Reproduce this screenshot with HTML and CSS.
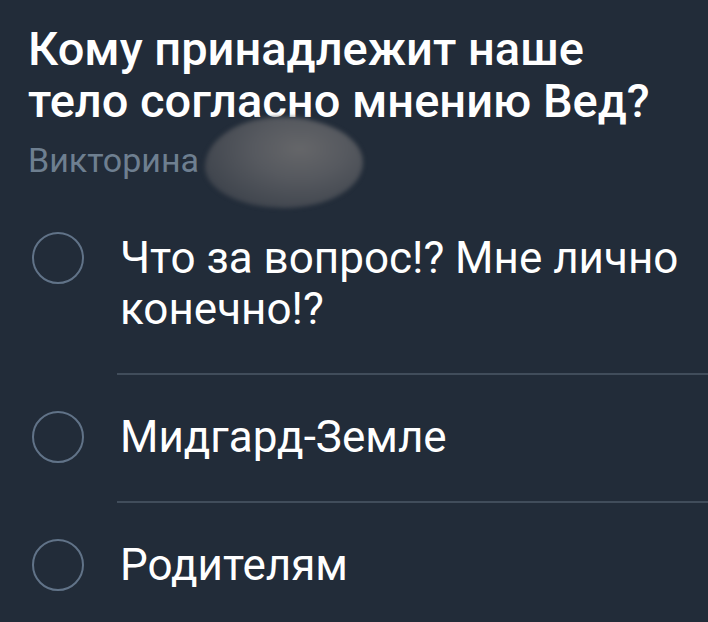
FILE: index.html
```html
<!DOCTYPE html>
<html lang="ru">
<head>
<meta charset="utf-8">
<link rel="stylesheet" href="styles.css">
</head>
<body>
<main class="poll">
  <header class="head">
    <h1 class="question">Кому принадлежит наше тело согласно мнению Вед?</h1>
    <div class="meta"><span class="kind">Викторина</span><span class="blur"></span></div>
  </header>
  <ul class="options">
    <li class="option">
      <span class="radio"></span>
      <span class="label">Что за вопрос!? Мне лично конечно!?</span>
    </li>
    <li class="option">
      <span class="radio"></span>
      <span class="label">Мидгард-Земле</span>
    </li>
    <li class="option">
      <span class="radio"></span>
      <span class="label">Родителям</span>
    </li>
  </ul>
</main>
</body>
</html>
```
FILE: styles.css
```css
html, body {
  margin: 0;
  padding: 0;
  background: #222c39;
  height: 100%;
  overflow: hidden;
}
body {
  font-family: Roboto, "Noto Sans", sans-serif;
  color: #ffffff;
}
.poll {
  padding: 23px 0 0 28px;
}
.question {
  margin: 0;
  font-size: 47px;
  font-weight: 500;
  line-height: 52px;
  width: 645px;
}
.meta {
  position: relative;
  margin-top: 13px;
  height: 40px;
  display: flex;
  align-items: center;
}
.kind {
  font-size: 34px;
  line-height: 40px;
  color: #6e7f90;
}
.blur {
  position: absolute;
  left: 177px;
  top: -23px;
  width: 158px;
  height: 91px;
  border-radius: 48% 52% 50% 50% / 55% 50% 50% 45%;
  background: radial-gradient(ellipse at 60% 35%, #656669 0%, #56595f 35%, #434850 70%, #323944 100%);
  filter: blur(2px);
}
.options {
  list-style: none;
  margin: 53px 0 0 0;
  padding: 0;
}
.option {
  display: flex;
  align-items: flex-start;
  gap: 33px;
  margin-left: 4px;
}
.radio {
  flex: none;
  width: 52px;
  height: 52px;
  box-sizing: border-box;
  border: 2.5px solid #617388;
  border-radius: 50%;
  margin-top: -1px;
}
.label {
  flex: 1;
  font-size: 44px;
  line-height: 51px;
  padding: 0 0 38px 3px;
  border-bottom: 2px solid #414d5b;
  margin-bottom: 37px;
}
.option:last-child .label {
  border-bottom: none;
  padding-bottom: 0;
  margin-bottom: 0;
}
```
